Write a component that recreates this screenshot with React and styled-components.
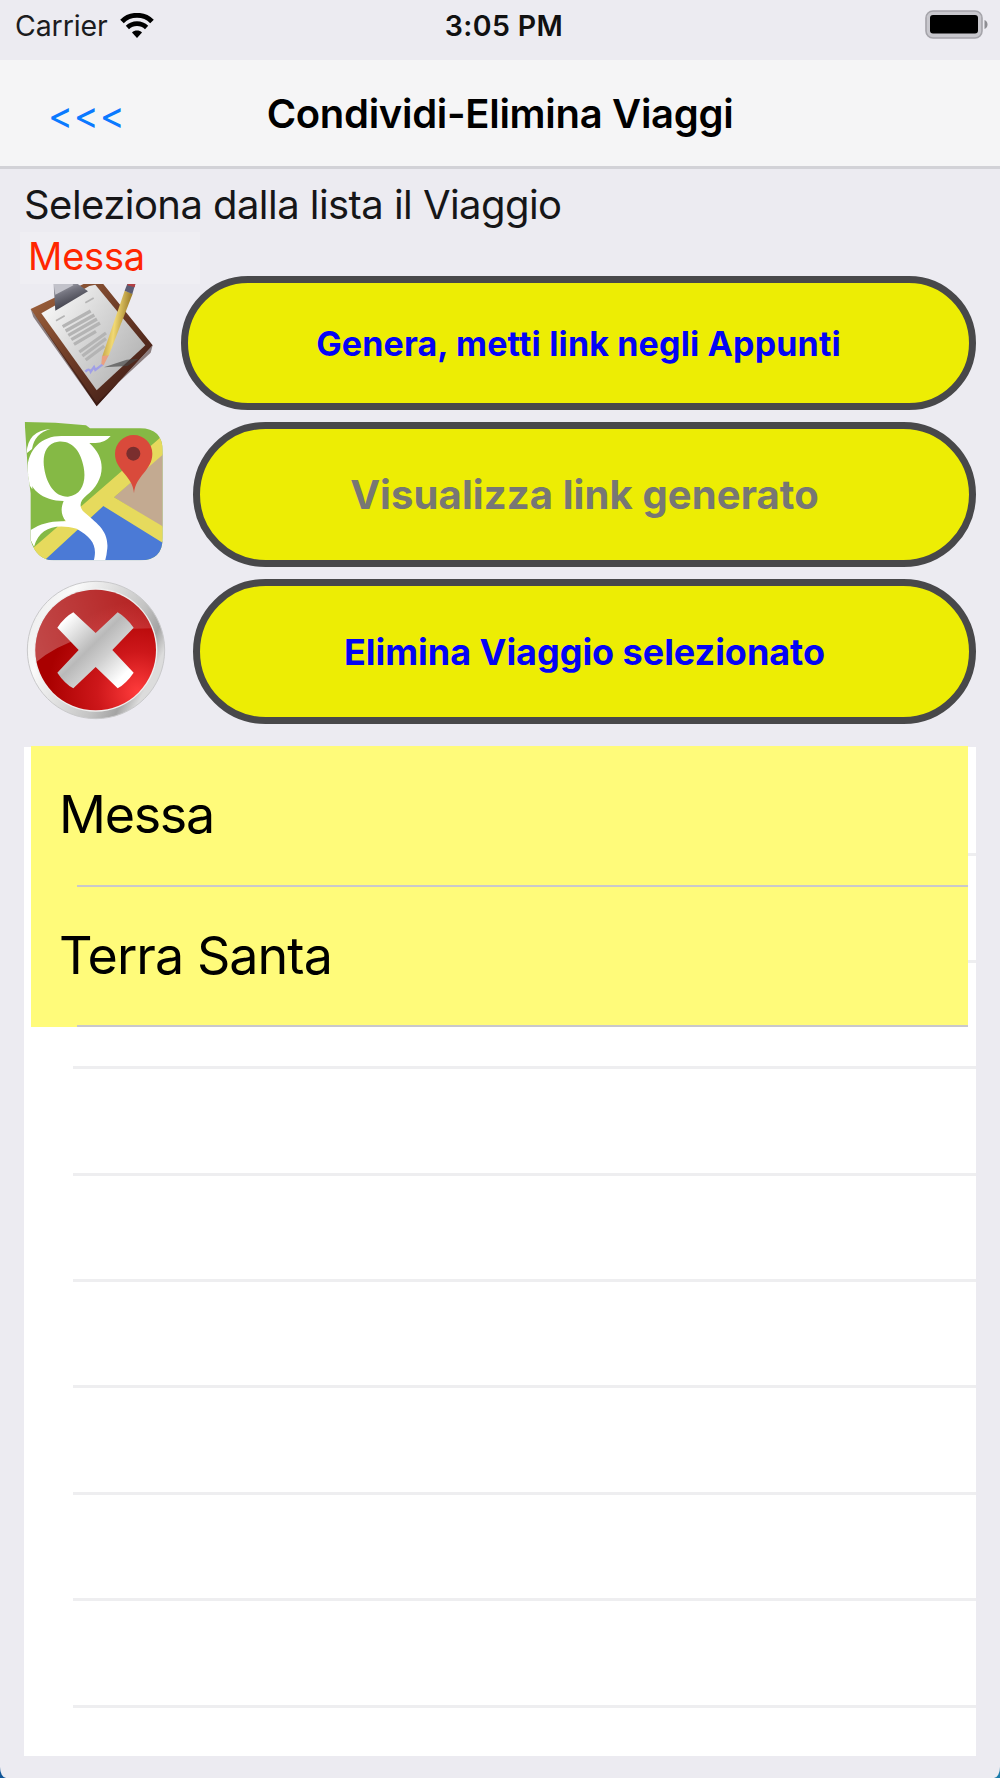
import styled, { createGlobalStyle } from "styled-components";

const GlobalStyle = createGlobalStyle`
  * {
    box-sizing: border-box;
  }

  body {
    margin: 0;
    background: linear-gradient(90deg, #0f5597, #1b7cab);
    font-family: Inter, "Liberation Sans", sans-serif;
    color: #000;
  }
`;

const Screen = styled.div`
  display: flex;
  flex-direction: column;
  width: 1000px;
  height: 1778px;
  overflow: hidden;
  background: #ecebf1;
  border-radius: 0 0 6px 6px / 0 0 11px 11px;
`;

const StatusBar = styled.header`
  display: grid;
  grid-template-columns: 1fr auto 1fr;
  align-items: center;
  height: 60px;
  padding: 0 12px 9px 15px;
`;

const Carrier = styled.div`
  display: flex;
  align-items: center;
  gap: 12px;
  font-size: 28.5px;
  letter-spacing: -0.1px;
  color: #1c1c1e;
`;

const Time = styled.time`
  padding-left: 5px;
  font-size: 28.5px;
  font-weight: 600;
  letter-spacing: 0.4px;
  color: #111;
`;

const BatteryIcon = styled.svg`
  justify-self: end;
  margin-top: -2px;
`;

const NavBar = styled.nav`
  display: grid;
  grid-template-columns: 200px 1fr 200px;
  align-items: center;
  height: 109px;
  background: #f5f5f6;
  border-bottom: 3px solid #d2d2d7;
`;

const BackButton = styled.button`
  justify-self: start;
  padding: 4px 0 0 48px;
  border: 0;
  background: none;
  font: inherit;
  font-size: 38px;
  letter-spacing: 0.7px;
  color: #0a7aff;
`;

const Title = styled.h1`
  margin: 0;
  text-align: center;
  font-size: 40px;
  font-weight: 600;
  letter-spacing: -0.3px;
  white-space: nowrap;
`;

const Content = styled.main`
  display: flex;
  flex-direction: column;
  padding: 0 24px;
`;

const Hint = styled.p`
  margin: 0;
  height: 63px;
  padding: 12px 0 0;
  font-size: 40px;
  line-height: 48px;
  letter-spacing: -0.55px;
  color: #161618;
  white-space: nowrap;
`;

/* The selected trip sits slightly over the first action icon */
const Selected = styled.div`
  position: relative;
  z-index: 1;
  width: 180px;
  height: 52px;
  margin: 0 0 -8px -4px;
  padding-left: 8px;
  background: #efeef3;
  font-size: 38px;
  line-height: 48px;
  letter-spacing: -0.2px;
  color: #ff2600;
`;

const Actions = styled.div`
  display: flex;
  flex-direction: column;
  gap: 12px;
`;

const ActionRow = styled.div`
  display: grid;
  grid-template-columns: ${({ $inset }) => $inset}px 1fr;
  height: ${({ $height }) => $height}px;
`;

const ActionIcon = styled.svg`
  width: 143px;
  height: 100%;
`;

const ActionButton = styled.button`
  padding: 0;
  border: 7px solid #48484a;
  border-radius: 73px;
  background: #eded04;
  font: inherit;
  font-weight: 700;
  font-size: ${({ $size }) => $size}px;
  letter-spacing: ${({ $spacing }) => $spacing}px;
  color: #0404f5;

  &:disabled {
    color: #777774;
  }
`;

const List = styled.section`
  display: grid;
  height: 1009px;
  margin-top: 23px;
`;

const EmptyRows = styled.div`
  grid-area: 1 / 1;
  height: 1009px;
  padding: 3px 0 0 49px;
  overflow: hidden;
  background: #fff;
`;

const EmptyRow = styled.div`
  height: 106.4px;
  border-bottom: 3px solid #eeeef0;
`;

const Trips = styled.ul`
  grid-area: 1 / 1;
  align-self: start;
  z-index: 1;
  margin: -1px 8px 0 7px;
  padding: 0;
  list-style: none;
`;

const Trip = styled.li`
  display: flex;
  flex-direction: column;
  height: 140.5px;
  background: #fffb7a;
  font-size: 52px;
  line-height: 137px;
  letter-spacing: ${({ $spacing }) => $spacing}px;

  &::after {
    content: "";
    flex: none;
    height: 2px;
    margin: auto 0 0 46px;
    background: #c9c8cc;
  }
`;

const TripName = styled.span`
  height: 137px;
  padding-left: 28px;
`;

function Wifi() {
  return (
    <svg width="34" height="25" viewBox="0 0 34 25" fill="none">
      <path d="M2 8.5C10 .3 24 .3 32 8.5" stroke="#000" strokeWidth="5" />
      <path d="M7.400 14.500c5.400-5.200 13.800-5.200 19.200 0" stroke="#000" strokeWidth="4.6" />
      <path d="M17 25l-5-5.600c2.700-2.600 7.300-2.600 10 0z" fill="#000" />
    </svg>
  );
}

function Battery() {
  return (
    <BatteryIcon width="63" height="29" viewBox="0 0 63 29">
      <rect x="1" y="1" width="56" height="27" rx="7" fill="#c8c7cd" stroke="#a5a4aa" strokeWidth="1.6" />
      <rect x="5" y="5" width="48" height="18.5" rx="3" fill="#000" />
      <path d="M59.5 10c4 1.500 4 7.500 0 9z" fill="#8e8e93" />
    </BatteryIcon>
  );
}

function ClipboardIcon() {
  return (
    <ActionIcon viewBox="72 48 429 402">
      <defs>
        <linearGradient id="board" x1="0" y1="0" x2="1" y2="1">
          <stop offset="0" stopColor="#a5673f" />
          <stop offset="0.5" stopColor="#6b3a26" />
          <stop offset="1" stopColor="#341512" />
        </linearGradient>
        <linearGradient id="sheet" x1="0" y1="0" x2="1" y2="0.7">
          <stop offset="0" stopColor="#fff" />
          <stop offset="0.5" stopColor="#d8d8d8" />
          <stop offset="1" stopColor="#b4b4b4" />
        </linearGradient>
        <linearGradient id="clip" x1="0" y1="0" x2="0.4" y2="1">
          <stop offset="0" stopColor="#d5d5dc" />
          <stop offset="0.5" stopColor="#74747f" />
          <stop offset="1" stopColor="#35353f" />
        </linearGradient>
        <linearGradient id="pencil" x1="0" y1="0" x2="1" y2="0.25">
          <stop offset="0" stopColor="#a37f24" />
          <stop offset="0.5" stopColor="#f1d974" />
          <stop offset="1" stopColor="#8f6d1c" />
        </linearGradient>
      </defs>
      <path d="M92 147L276 60q20-5 32 10l150 186-168 183z" fill="url(#board)" />
      <path d="M92 147l8 24 190 268 168-183-6 22-162 150z" fill="#2c110e" opacity="0.5" />
      <path d="M124 160L268 78l18-4 150 182-146 135z" fill="url(#sheet)" />
      <path d="M160 62l48-8 56 40-98 58z" fill="url(#clip)" />
      <path d="M160 62l46-10 14 24-54 28z" fill="#c2c2ca" />
      <g stroke="#b4b4b4" strokeWidth="10" fill="none">
        <path d="M168 182l26-15M256 128l25-14" strokeWidth="5" />
        <path d="M188 200l84-47M197 213l86-48M205 226l86-49M214 239l86-50M222 253l66-39" />
        <path d="M238 276l80-57M247 288l71-52M257 300l56-42" />
      </g>
      <path d="M256 335q12-12 16 0l10-14 4 9 22-17" stroke="#a09fe6" strokeWidth="7" fill="none" />
      <path d="M312 322l70-4 34-22-36 3z" fill="#444" opacity="0.65" />
      <path d="M374 92l24 9-72 186-20 4z" fill="url(#pencil)" />
      <path d="M306 288l20-2-15 30-7-4z" fill="#eaa080" />
      <path d="M374 92l10-26 22 6-9 30z" fill="#5b5c74" />
      <path d="M382 76l6-18 20 4-4 20z" fill="#b23f43" />
    </ActionIcon>
  );
}

function MapsIcon() {
  return (
    <ActionIcon viewBox="72 36 429 435">
      <defs>
        <clipPath id="tile">
          <path d="M74 36l92 2 92 8 12 9h150q68 0 68 68v260q0 68-68 68H160q-50 0-68-60V250l-8-60z" />
        </clipPath>
      </defs>
      <g clipPath="url(#tile)">
        <path d="M72 30h420v425H72z" fill="#85b945" />
        <path d="M342 262L500 120v240z" fill="#c3aa91" />
        <path d="M128 455l182-168 190 114v60z" fill="#4b7ad6" />
        <path d="M95 418L500 66v58L342 262l158 94v50L310 288 132 452z" fill="#e6da5d" />
        <path d="M80 130q2-68 72-73-48 12-56 60z" fill="#fff" />
        <path
          d="M184 78h148q-18 22-48 21h-16c58 52 42 117-8 157-18 16-24 28-12 46 42 38 78 58 74 113q-2 23-8 42h-34c14-49-2-73-50-101-66-16-111-2-128 54l-10-20V360c32-20 62-28 106-26-16-18-16-40-7-61-63 0-108-35-109-95 2-60 42-100 102-100zm-10 17c-38 4-48 44-41 82 7 44 31 84 71 83 43-4 55-47 47-88-8-48-35-82-77-77z"
          fill="#fff"
          fillRule="evenodd"
        />
        <path d="M81 196q-10 6 16 42v-50z" fill="#fff" />
      </g>
      <path d="M402 250c-3-54-57-68-57-119a56 56 0 01112 0c0 51-51 65-55 119z" fill="#d94a3b" />
      <circle cx="400" cy="131" r="21" fill="#7a2e2e" />
    </ActionIcon>
  );
}

function DeleteIcon() {
  return (
    <ActionIcon viewBox="72 42 429 435">
      <defs>
        <linearGradient id="rim" x1="0" y1="0" x2="1" y2="0.5">
          <stop offset="0" stopColor="#e6e6e6" />
          <stop offset="0.3" stopColor="#fafafa" />
          <stop offset="0.75" stopColor="#c4c4c4" />
          <stop offset="0.9" stopColor="#a4a4a4" />
          <stop offset="1" stopColor="#dcdcdc" />
        </linearGradient>
        <radialGradient id="red" cx="0.85" cy="0.85" r="0.75">
          <stop offset="0" stopColor="#ff3c3c" />
          <stop offset="0.45" stopColor="#cd171a" />
          <stop offset="1" stopColor="#a90000" />
        </radialGradient>
        <linearGradient id="cross" x1="0" y1="0" x2="1" y2="1">
          <stop offset="0.1" stopColor="#fff" />
          <stop offset="0.45" stopColor="#b9b9b9" />
          <stop offset="0.6" stopColor="#cfcfcf" />
          <stop offset="0.85" stopColor="#fff" />
        </linearGradient>
        <linearGradient id="gloss" x1="0" y1="0.6" x2="1" y2="0.4">
          <stop offset="0" stopColor="#fff" stopOpacity="0.28" />
          <stop offset="1" stopColor="#fff" stopOpacity="0.12" />
        </linearGradient>
        <clipPath id="disc">
          <circle cx="287" cy="255" r="181" />
        </clipPath>
      </defs>
      <circle cx="288" cy="255" r="206" fill="url(#rim)" stroke="#c9c9cb" strokeWidth="3" />
      <circle cx="287" cy="255" r="185" fill="#efefef" />
      <circle cx="287" cy="255" r="181" fill="url(#red)" />
      <path
        d="M100 298Q230 185 480 190V60H100z"
        fill="url(#gloss)"
        clipPath="url(#disc)"
      />
      <path
        d="M220 142l67 62 66-62q24 14 48 46l-64 67 64 68q-22 32-48 47l-66-64-67 64q-26-14-48-47l64-68-64-67q22-32 48-46z"
        fill="url(#cross)"
      />
    </ActionIcon>
  );
}

const actions = [
  {
    label: "Genera, metti link negli Appunti",
    Icon: ClipboardIcon,
    height: 134,
    inset: 157,
    size: 34,
    spacing: 0.15,
  },
  {
    label: "Visualizza link generato",
    Icon: MapsIcon,
    height: 145,
    inset: 169,
    size: 40,
    spacing: 0.1,
    disabled: true,
  },
  {
    label: "Elimina Viaggio selezionato",
    Icon: DeleteIcon,
    height: 145,
    inset: 169,
    size: 36,
    spacing: -0.04,
  },
];

const trips = [
  { name: "Messa", spacing: -1.3 },
  { name: "Terra Santa", spacing: -0.95 },
];

export default function App() {
  return (
    <>
      <GlobalStyle />
      <Screen>
        <StatusBar>
          <Carrier>
            <span>Carrier</span>
            <Wifi />
          </Carrier>
          <Time>3:05 PM</Time>
          <Battery />
        </StatusBar>
        <NavBar>
          <BackButton>&lt;&lt;&lt;</BackButton>
          <Title>Condividi-Elimina Viaggi</Title>
        </NavBar>
        <Content>
          <Hint>Seleziona dalla lista il Viaggio</Hint>
          <Selected>Messa</Selected>
          <Actions>
            {actions.map(({ label, Icon, height, inset, size, spacing, disabled }) => (
              <ActionRow key={label} $height={height} $inset={inset}>
                <Icon />
                <ActionButton $size={size} $spacing={spacing} disabled={disabled}>
                  {label}
                </ActionButton>
              </ActionRow>
            ))}
          </Actions>
          <List>
            <EmptyRows>
              {Array.from({ length: 9 }, (_, i) => (
                <EmptyRow key={i} />
              ))}
            </EmptyRows>
            <Trips>
              {trips.map(({ name, spacing }) => (
                <Trip key={name} $spacing={spacing}>
                  <TripName>{name}</TripName>
                </Trip>
              ))}
            </Trips>
          </List>
        </Content>
      </Screen>
    </>
  );
}
